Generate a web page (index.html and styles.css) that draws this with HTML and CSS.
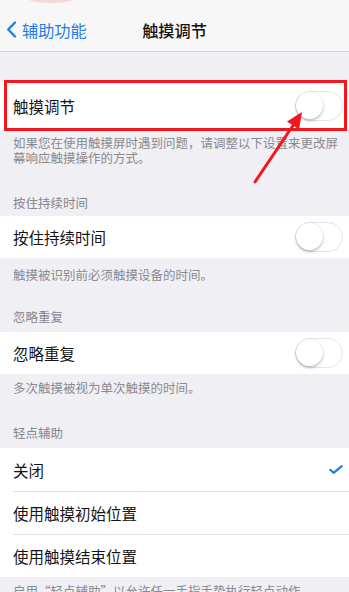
FILE: index.html
```html
<!DOCTYPE html>
<html lang="zh-CN">
<head>
<meta charset="utf-8">
<link rel="stylesheet" href="styles.css">
</head>
<body>
<div class="screen">
  <div class="status-blob"></div>
  <header class="nav">
    <div class="back">
      <svg class="chev" width="11" height="17" viewBox="0 0 11 17"><path d="M9 1.5 L2.2 8.5 L9 15.5" fill="none" stroke="#1f7de6" stroke-width="2.4" stroke-linecap="round" stroke-linejoin="round"/></svg>
      <span>辅助功能</span>
    </div>
    <div class="title">触摸调节</div>
    <div></div>
  </header>

  <section class="group g1">
    <div class="cell tall">
      <span>触摸调节</span>
      <span class="toggle"><span class="knob"></span></span>
    </div>
    <p class="foot f1">如果您在使用触摸屏时遇到问题，请调整以下设置来更改屏幕响应触摸操作的方式。</p>
  </section>

  <section class="group">
    <h2 class="head h2a">按住持续时间</h2>
    <div class="cell">
      <span>按住持续时间</span>
      <span class="toggle"><span class="knob"></span></span>
    </div>
    <p class="foot f2">触摸被识别前必须触摸设备的时间。</p>
  </section>

  <section class="group">
    <h2 class="head h2b">忽略重复</h2>
    <div class="cell">
      <span>忽略重复</span>
      <span class="toggle"><span class="knob"></span></span>
    </div>
    <p class="foot f3">多次触摸被视为单次触摸的时间。</p>
  </section>

  <section class="group">
    <h2 class="head h2c">轻点辅助</h2>
    <div class="list">
      <div class="cell row">
        <span>关闭</span>
        <svg class="check" width="14" height="9" viewBox="0 0 14 9"><path d="M1.2 4.8 L4.6 7.8 L12.8 1.2" fill="none" stroke="#1f7de6" stroke-width="2.2" stroke-linecap="round" stroke-linejoin="round"/></svg>
      </div>
      <div class="cell row"><span>使用触摸初始位置</span></div>
      <div class="cell row"><span>使用触摸结束位置</span></div>
    </div>
    <p class="foot f4">启用“轻点辅助”以允许任一手指手势执行轻点动作。</p>
  </section>

  <div class="redbox"></div>
  <svg class="arrow" width="349" height="592" viewBox="0 0 349 592">
    <line x1="255" y1="182" x2="294" y2="124" stroke="#f3161c" stroke-width="3" stroke-linecap="round"/>
    <polygon points="302,112 287,121.5 299,129.5" fill="#f3161c"/>
  </svg>
</div>
</body>
</html>
```

FILE: styles.css
```css
* { box-sizing: border-box; margin: 0; padding: 0; }
html, body { width: 349px; height: 592px; overflow: hidden; }
body {
  background: #efeff4;
  font-family: "Noto Sans CJK SC", "Noto Sans", sans-serif;
  color: #141414;
}
.screen { position: relative; width: 349px; height: 592px; overflow: hidden; }

.status-blob {
  position: absolute;
  left: 28px; top: -6px;
  width: 46px; height: 9px;
  border-radius: 50%;
  background: #f6cfd0;
  opacity: 0.8;
}

.nav {
  height: 52px;
  background: #f7f7f8;
  border-bottom: 1px solid #d3d3d7;
  display: grid;
  grid-template-columns: 1fr auto 1fr;
  align-items: center;
}
.back {
  display: flex;
  align-items: center;
  padding-left: 6px;
  gap: 5px;
  color: #1f7de6;
  font-size: 16.2px;
  line-height: 20px;
  padding-top: 8px;
}
.chev { display: block; }
.title {
  font-size: 16.2px;
  line-height: 20px;
  font-weight: 500;
  color: #111;
  padding-top: 8px;
}

.cell {
  background: #fff;
  height: 42px;
  display: flex;
  align-items: center;
  justify-content: space-between;
  padding: 0 6px 0 13px;
  font-size: 15.5px;
  line-height: 20px;
}
.cell.tall { height: 48px; }
.g1 { margin-top: 30px; }

.toggle {
  width: 48px;
  height: 30px;
  border-radius: 15px;
  border: 1.5px solid #e4e4e7;
  background: #fff;
  position: relative;
  flex: none;
}
.knob {
  position: absolute;
  left: 0; top: 0;
  width: 27px; height: 27px;
  border-radius: 50%;
  background: #fff;
  box-shadow: 0 2px 3px rgba(0,0,0,0.22), 0 0 0 0.5px rgba(0,0,0,0.08);
}

.foot {
  font-size: 12.5px;
  line-height: 15px;
  color: #8a8a8f;
  padding: 0 8px 0 13px;
}
.f1 { padding-top: 5px; }
.f2 { padding-top: 9px; }
.f3 { padding-top: 6px; }
.f4 { padding-top: 6px; white-space: nowrap; }

.head {
  font-size: 12.5px;
  line-height: 15px;
  font-weight: 400;
  color: #86868b;
  padding: 0 13px 6px;
}
.h2a { margin-top: 30px; padding-bottom: 6px; }
.h2b { margin-top: 27px; padding-bottom: 8px; }
.h2c { margin-top: 30px; padding-bottom: 8px; }

.list { background: #fff; }
.row { height: 43px; position: relative; padding-right: 6px; }
.row + .row::before {
  content: "";
  position: absolute;
  left: 13px; right: 0; top: 0;
  border-top: 1px solid #e2e2e6;
}
.check { margin-right: 0; }

.redbox {
  position: absolute;
  left: 4px; top: 80px;
  width: 343px; height: 51px;
  border: 3px solid #f3161c;
}
.arrow { position: absolute; left: 0; top: 0; pointer-events: none; }
```
